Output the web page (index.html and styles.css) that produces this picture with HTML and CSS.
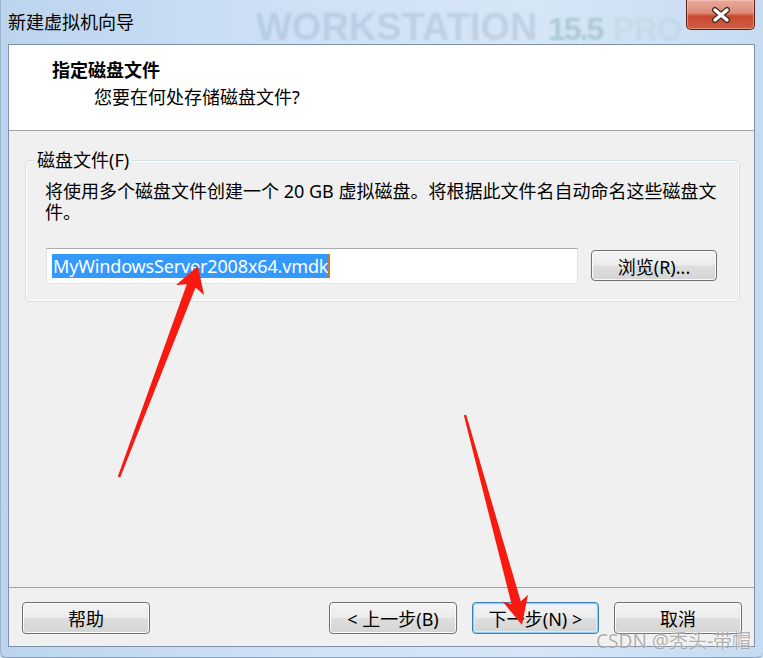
FILE: index.html
```html
<!DOCTYPE html>
<html lang="zh-CN">

<head>
    <meta charset="UTF-8">
    <title>新建虚拟机向导</title>
    <link rel="stylesheet" href="styles.css">
</head>

<body>
    <div class="window">
        <div class="titlebar">
            <span class="title">新建虚拟机向导</span>
            <span class="brand">WORKSTATION <b class="ver">15.5</b> <b class="pro">PRO</b></span>
            <button class="close" title="关闭">
                <svg width="24" height="18" viewBox="0 0 24 18">
                    <path d="M6 4 L18 14 M18 4 L6 14" stroke="#4a2a24" stroke-width="6" stroke-linecap="round" />
                    <path d="M6 4 L18 14 M18 4 L6 14" stroke="#ffffff" stroke-width="3.4" stroke-linecap="round" />
                </svg>
            </button>
        </div>

        <div class="client">
            <div class="header">
                <h1>指定磁盘文件</h1>
                <p>您要在何处存储磁盘文件?</p>
            </div>

            <div class="body">
                <fieldset class="group">
                    <legend>磁盘文件(F)</legend>
                    <div class="group-inner">
                        <p class="desc">将使用多个磁盘文件创建一个 20 GB 虚拟磁盘。将根据此文件名自动命名这些磁盘文件。</p>
                        <div class="file-row">
                            <div class="textbox"><span class="sel">MyWindowsServer2008x64.vmdk</span><span class="caret"></span></div>
                            <button class="btn browse">浏览(R)...</button>
                        </div>
                    </div>
                </fieldset>
            </div>

            <div class="footer">
                <button class="btn">帮助</button>
                <button class="btn back">&lt; 上一步(B)</button>
                <button class="btn next">下一步(N) &gt;</button>
                <button class="btn">取消</button>
            </div>
        </div>

        <!-- red annotation arrows drawn over the dialog -->
        <svg class="arrows" width="763" height="658" viewBox="0 0 763 658">
            <polygon fill="#f81a10" points="197,266 203,295 194.5,287.5 119.2,477.4 116.8,476.6 185.8,284.3 175,285" />
            <polygon fill="#f81a10" points="521,625 501.6,601.6 510.6,604.2 462.8,415.3 465.2,414.7 519.8,601.6 527,594.7" />
        </svg>

        <div class="watermark">CSDN @秃头-带帽</div>
    </div>
</body>

</html>
```

FILE: styles.css
```css
* {
    box-sizing: border-box;
}

body {
    margin: 0;
    background: #c9ddf3;
    font-family: "Noto Sans", "Noto Sans CJK SC", sans-serif;
    font-size: 18px;
    color: #000;
}

.window {
    position: relative;
    width: 763px;
    height: 658px;
    display: flex;
    flex-direction: column;
    padding: 0 8px 10px 7px;
    background: linear-gradient(90deg, #bcd4ee 0%, #cfe1f5 40%, #d6e6f7 70%, #c6dbf1 100%);
    border-left: 1px solid #9bb3cf;
    border-bottom: 1px solid #8aa2bf;
    border-radius: 0 0 6px 6px;
    overflow: hidden;
}

/* title bar */
.titlebar {
    position: relative;
    height: 44px;
    display: flex;
    align-items: flex-start;
    overflow: hidden;
}

.title {
    margin-top: 9px;
    line-height: 26px;
    font-size: 18px;
    color: #000;
}

.brand {
    position: absolute;
    left: 248px;
    top: 7px;
    font-family: "Liberation Sans", sans-serif;
    font-weight: 700;
    font-size: 38px;
    line-height: 40px;
    color: rgba(100, 128, 160, 0.2);
    filter: blur(0.9px);
    white-space: nowrap;
}

.brand .ver {
    font-size: 32px;
    letter-spacing: -2px;
    color: rgba(60, 135, 100, 0.26);
}

.brand .pro {
    font-size: 32px;
    color: rgba(120, 170, 140, 0.12);
}

.close {
    margin-left: auto;
    width: 69px;
    height: 30px;
    padding: 0;
    display: flex;
    align-items: center;
    justify-content: center;
    border: 1px solid #5e1c12;
    border-top: none;
    border-radius: 0 0 5px 5px;
    background: linear-gradient(#e9aa9c 0%, #dc8a78 45%, #c84a30 55%, #cf5d44 100%);
    box-shadow: inset 0 0 0 1px rgba(255, 210, 200, 0.45);
}

/* client area */
.client {
    flex: 1;
    display: flex;
    flex-direction: column;
    background: #f0f0f0;
    border: 1px solid #7f91a6;
}

.header {
    height: 86px;
    padding: 13px 0 0 43px;
    background: #fff;
    border-bottom: 1px solid #a0a0a0;
}

.header h1 {
    margin: 0;
    font-size: 18px;
    font-weight: 700;
    line-height: 24px;
}

.header p {
    margin: 3px 0 0 42px;
    font-size: 18px;
    line-height: 24px;
}

.body {
    flex: 1;
    padding: 18px 14px 0 16px;
}

.group {
    margin: 0;
    padding: 10px 14px 17px 8px;
    border: 1px solid #d5dfe5;
    border-radius: 4px;
    box-shadow: inset 0 0 0 1px #fff;
}

.group legend {
    padding: 0 3px;
    line-height: 22px;
    font-size: 18px;
}

.group-inner {
    padding-left: 11px;
}

.desc {
    margin: 0;
    line-height: 21px;
}

.file-row {
    display: flex;
    align-items: flex-start;
    gap: 13px;
    margin: 25px 8px 0 1px;
}

.textbox {
    flex: 1;
    height: 36px;
    display: flex;
    align-items: center;
    padding-left: 5px;
    background: #fff;
    border: 1px solid #dbe3ec;
    border-top-color: #abadb3;
}

.sel {
    background: #3399ff;
    color: #fff;
    line-height: 24px;
    padding-left: 1px;
    letter-spacing: -0.15px;
}

.caret {
    width: 2px;
    height: 24px;
    background: #c27a2e;
}

/* push buttons */
.btn {
    width: 128px;
    height: 32px;
    padding: 0;
    font-family: inherit;
    font-size: 18px;
    color: #000;
    border: 1px solid #707070;
    border-radius: 4px;
    background: linear-gradient(#f4f4f4 0%, #ececec 48%, #dedede 52%, #d4d4d4 100%);
    box-shadow: inset 0 0 0 1px #fbfbfb;
}

.browse {
    width: 126px;
    height: 31px;
    margin-top: 2px;
}

.footer {
    display: flex;
    gap: 15px;
    padding: 14px 12px 12px 13px;
    border-top: 1px solid #a0a0a0;
}

.footer .back {
    margin-left: auto;
}

.footer .next {
    width: 127px;
    border-color: #3c7fb1;
    box-shadow: inset 0 0 0 1px #8fd0f2, inset 0 0 0 2px #d6eefb;
}

.arrows {
    position: absolute;
    left: 0;
    top: 0;
    pointer-events: none;
}

.watermark {
    position: absolute;
    right: 12px;
    bottom: 5px;
    font-size: 19px;
    line-height: 22px;
    color: rgba(150, 150, 150, 0.75);
    text-shadow: 0 0 2px rgba(255, 255, 255, 0.9);
    pointer-events: none;
}
```
